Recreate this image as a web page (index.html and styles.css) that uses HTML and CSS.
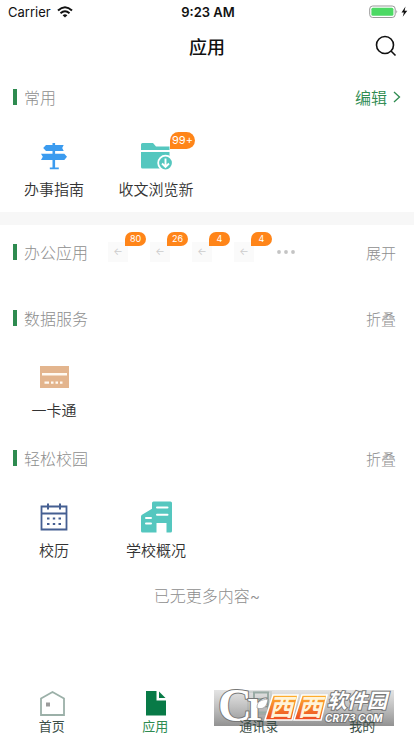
FILE: index.html
```html
<!DOCTYPE html>
<html lang="zh-CN">
<head>
<meta charset="utf-8">
<meta name="viewport" content="width=device-width, initial-scale=1">
<title>应用</title>
<link rel="stylesheet" href="styles.css">
</head>
<body>
<div class="status">
  <div class="carrier"><span>Carrier</span>
    <svg width="16" height="12" viewBox="0 0 16 12" fill="none" stroke="#111" stroke-width="2"><path d="M1 4.500Q8-2 15 4.500M3.500 7.200Q8 3.200 12.500 7.200"/><path d="M8 11.500 5.600 9.200Q8 7.300 10.400 9.200Z" fill="#111" stroke="none"/></svg>
  </div>
  <span class="clock">9:23 AM</span>
  <div class="power">
    <svg width="39" height="14" viewBox="0 0 39 14"><rect x=".7" y="1" width="25.500" height="11.500" rx="3" fill="#fff" stroke="#999"/><rect x="2.400" y="2.800" width="22" height="8" rx="1.500" fill="#4cd964"/><path d="M27.500 5q1.500 1.800 0 3.600z" fill="#777"/><path d="M36.500 1.500 32.500 7.600h2.400l-1.200 4.200 4.600-6h-2.700z" fill="#111"/></svg>
  </div>
</div>
<header class="header">
  <h1>应用</h1>
  <button class="search" type="button" aria-label="搜索"><svg width="22" height="22" viewBox="0 0 22 22" fill="none" stroke="#111" stroke-width="1.600"><circle cx="10" cy="10" r="8.500"/><path d="m16 16 4.500 4.500"/></svg></button>
</header>
<main>
  <section class="favorites">
    <div class="head"><h2>常用</h2><button class="edit" type="button">编辑<svg width="8" height="12" viewBox="0 0 8 12" fill="none" stroke="currentColor" stroke-width="1.300"><path d="m1 1 5.500 5L1 11"/></svg></button></div>
    <div class="grid">
      <a class="tile" href="#guide">
        <span class="pic"><svg width="32" height="32" viewBox="0 0 32 32" fill="#3b9bef"><path d="M14.500 3h2.600v2h8.600l-1.500 3 1.500 3h-8.600v2.800h9.200l2.700 3-2.700 3.200h-9.200v7.500h3.700v1.800h-9v-1.800h2.700V20H3l1.800-3.200L3 13.800h11.500V11H8l-2.800-3L8 5h6.500z"/></svg></span>
        <span>办事指南</span>
      </a>
      <a class="tile" href="#documents">
        <span class="pic"><svg width="32" height="32" viewBox="0 0 32 32"><path d="M1 10V4.500Q1 3 2.500 3H13l3 3.500h13.500V10zM1 12h28.500v16.500h-27Q1 28.500 1 27z" fill="#55c7bf"/><circle cx="25.500" cy="23" r="7.300" fill="#55c7bf" stroke="#fff" stroke-width="1.800"/><path d="M25.500 18.500v8M22 23.500l3.500 3.500 3.500-3.500" fill="none" stroke="#fff" stroke-width="1.900"/></svg><b class="badge large">99+</b></span>
        <span>收文浏览新</span>
      </a>
    </div>
  </section>
  <section class="office">
    <div class="head"><h2>办公应用</h2>
      <div class="previews">
        <span class="preview">←<b class="badge">80</b></span>
        <span class="preview">←<b class="badge">26</b></span>
        <span class="preview">←<b class="badge">4</b></span>
        <span class="preview">←<b class="badge">4</b></span>
        <svg class="dots" width="18" height="4" viewBox="0 0 18 4" fill="#c4c4c4"><circle cx="2" cy="2" r="1.900"/><circle cx="9" cy="2" r="1.900"/><circle cx="16" cy="2" r="1.900"/></svg>
      </div>
      <button class="toggle" type="button">展开</button></div>
  </section>
  <section class="data">
    <div class="head"><h2>数据服务</h2><button class="toggle" type="button">折叠</button></div>
    <div class="grid">
      <a class="tile" href="#card">
        <span class="pic"><svg width="32" height="32" viewBox="0 0 32 32"><path d="M2 5h29v22H2z" fill="#e3b58e"/><path d="M4 12h25v2.600H4zM6.500 20.500H11v2.200H6.500zM13 20.500h2.500v2.200H13zM17.500 20.500H20v2.200h-2.500zM22 20.500h2.500v2.200H22z" fill="#fffaf2"/></svg></span>
        <span>一卡通</span>
      </a>
    </div>
  </section>
  <section class="campus">
    <div class="head"><h2>轻松校园</h2><button class="toggle" type="button">折叠</button></div>
    <div class="grid">
      <a class="tile" href="#calendar">
        <span class="pic"><svg width="32" height="32" viewBox="0 0 32 32" fill="none" stroke="#455f92" stroke-width="1.800"><path d="M3.500 5.500h25v23h-25zM3.500 12.500h25"/><path d="M10 2.500v6M22 2.500v6" stroke-width="2"/><path d="M9 17.500h2.500m3.300 0h2.400m3.300 0H23M9 23h2.500m3.300 0h2.400m3.300 0H23" stroke-width="2.200"/></svg></span>
        <span>校历</span>
      </a>
      <a class="tile" href="#school">
        <span class="pic"><svg width="32" height="32" viewBox="0 0 32 32"><path d="M12 2q0-1.500 1.500-1.500h17Q32 .5 32 2v28q0 1.500-1.500 1.500h-4V22h-10v9.500h-14Q1 31.500 1 30V15.500q0-1 1-1.700l10-6z" fill="#55c7bf"/><path d="M17 6.500h10.500M17 13.800h10.500M6 17h5M6 22.500h5" stroke="#fff" stroke-width="2" stroke-linecap="round"/></svg></span>
        <span>学校概况</span>
      </a>
    </div>
  </section>
  <p class="end">已无更多内容~</p>
</main>
<nav class="tabs">
  <a href="#home"><svg width="26" height="26" viewBox="0 0 26 26" fill="none" stroke="#9bb0a8" stroke-width="1.800"><path d="M2 8.500 13.500 2 25 8.500V25H2z"/><path d="M7 12.500h4v4H7z" fill="#9b9b9b" stroke="none"/></svg><span>首页</span></a>
  <a class="active" href="#apps"><svg width="26" height="26" viewBox="0 0 26 26" fill="#087a47"><path d="M4 1h10.500v9.500H24V25.500H4z"/><path d="M17 1.500 23.500 8H17z"/></svg><span>应用</span></a>
  <a href="#contacts"><svg width="26" height="26" viewBox="0 0 26 26" fill="none" stroke="#9bb0a8" stroke-width="1.800"><path d="M2 2h23v22H2zM7 9h13M7 15h13"/></svg><span>通讯录</span></a>
  <a href="#mine"><svg width="26" height="26" viewBox="0 0 26 26" fill="none" stroke="#9bb0a8" stroke-width="1.800"><circle cx="13" cy="7" r="5.500"/><path d="M3 25c0-13 20-13 20 0z"/></svg><span>我的</span></a>
  <svg class="mark" width="180" height="42" viewBox="0 0 180 42">
    <defs>
      <linearGradient id="plate" x2="0" y2="1"><stop stop-color="#ddd" stop-opacity=".8"/><stop offset="1" stop-color="#8c8c8c" stop-opacity=".95"/></linearGradient>
      <linearGradient id="orange" x2="0" y2="1"><stop stop-color="#ffb22e"/><stop offset="1" stop-color="#ec4a22"/></linearGradient>
    </defs>
    <path d="M0 6h180v36H0z" fill="url(#plate)"/>
    <path d="M40 8.500h14v20H40zM43 15h9" fill="none" stroke="#9aaba5" stroke-width="2"/>
    <g class="initials"><text x="4" y="37" font-size="47">C</text><text x="33" y="36" font-size="46">r</text></g>
    <path d="M43 24c0-7 4-8 11-9-1 8-5 11-11 9z" fill="#fff" stroke="#888" stroke-width=".6"/>
    <path d="M59 11h25l-6 25H51zM88 11h25l-6 25H80z" fill="url(#orange)" stroke="#fff" stroke-width="1.500"/>
    <g class="blocks"><text x="55" y="32">西</text><text x="84" y="32">西</text></g>
    <text class="brand" x="113" y="24">软件园</text>
    <text class="domain" x="111" y="38">CR173.COM</text>
  </svg>
</nav>
</body>
</html>
```

FILE: styles.css
```css
* { box-sizing: border-box; }
body {
  margin: 0;
  min-height: 100vh;
  display: flex;
  flex-direction: column;
  background: #fff;
  color: #333;
  font-family: Inter, "Noto Sans CJK SC", sans-serif;
  font-size: 15px;
}
svg { display: block; }
button {
  padding: 0;
  border: 0;
  background: none;
  color: inherit;
  font: inherit;
}
a { color: inherit; text-decoration: none; }
h1, h2, p { margin: 0; font-weight: 400; }

.status {
  height: 24px;
  display: grid;
  grid-template-columns: 1fr auto 1fr;
  align-items: center;
  padding: 0 6px 0 8px;
  color: #111;
  font-size: 13px;
}
.carrier { display: flex; align-items: center; gap: 6px; }
.clock { font-weight: 600; }
.power { justify-self: end; }

.header {
  height: 44px;
  display: grid;
  grid-template-columns: 1fr auto 1fr;
  align-items: center;
  padding: 0 17px;
  color: #111;
}
.header h1 { grid-column: 2; font-size: 18px; font-weight: 500; }
.search { justify-self: end; }

main { flex: 1; }
.head {
  height: 48px;
  display: flex;
  align-items: center;
  padding: 0 18px 0 13px;
  color: #8e8e8e;
}
.head h2 {
  display: flex;
  align-items: center;
  gap: 7px;
  font-size: 16px;
  font-weight: 300;
}
.head h2::before { content: ""; width: 4px; height: 16px; background: #2e8b50; }
.head button { margin-left: auto; }
.head .toggle { font-weight: 300; }
.head .edit {
  display: flex;
  align-items: center;
  gap: 6px;
  margin-right: -5px;
  color: #2e8b50;
  font-size: 16px;
  font-weight: 350;
}

.grid {
  display: grid;
  grid-template-columns: repeat(4, 1fr);
  padding: 0 3px;
}
.tile {
  display: flex;
  flex-direction: column;
  align-items: center;
  gap: 7px;
  font-weight: 350;
  line-height: 22px;
  white-space: nowrap;
}
.pic { position: relative; }
.badge {
  position: absolute;
  left: 17px;
  top: -10px;
  width: 21px;
  height: 14px;
  border-radius: 7px 7px 7px 0;
  background: #ff8519;
  color: #fff;
  font-size: 9px;
  font-weight: 400;
  line-height: 14px;
  text-align: center;
}
.badge.large {
  left: 30px;
  top: -8px;
  width: 25px;
  height: 17px;
  border-radius: 9px 9px 9px 0;
  font-size: 11px;
  line-height: 17px;
}

.favorites { padding: 5px 0 11px; border-bottom: 13px solid #f7f7f7; }
.favorites .grid { margin-top: 19px; }
.office { padding: 3px 0 18px; }
.previews { display: flex; align-items: center; margin-left: 20px; gap: 22px; }
.preview {
  position: relative;
  width: 20px;
  height: 20px;
  background: #fafafa;
  color: #ccc;
  font-size: 10px;
  line-height: 18px;
  text-align: center;
}
.dots { margin-left: 1px; }
.data .grid { margin-top: 19px; }
.campus { padding-top: 12px; }
.campus .grid { margin-top: 19px; }
.end {
  margin-top: 22px;
  color: #8e8e8e;
  font-size: 16px;
  font-weight: 300;
  line-height: 24px;
  text-align: center;
}

.tabs {
  position: relative;
  height: 50px;
  display: grid;
  grid-template-columns: repeat(4, 1fr);
  padding-top: 4px;
  font-size: 13px;
  line-height: 18px;
}
.tabs a { display: flex; flex-direction: column; align-items: center; gap: 1px; }
.tabs a span { position: relative; z-index: 2; color: #3c4f47; }
.tabs a.active span { color: #2e8b50; }
.mark { position: absolute; right: 20px; bottom: 10px; z-index: 1; overflow: visible; }
.initials {
  fill: #fff;
  stroke: #777;
  stroke-width: 2px;
  paint-order: stroke;
  font-family: "Liberation Serif", serif;
  font-weight: 700;
}
.blocks {
  fill: #fff3d8;
  font-size: 24px;
  font-style: italic;
  font-weight: 700;
}
.brand, .domain {
  fill: #fff;
  stroke: #777;
  stroke-width: 2px;
  paint-order: stroke;
  font-style: italic;
  font-weight: 700;
}
.brand { font-size: 20px; }
.domain { font-size: 10px; }
```
